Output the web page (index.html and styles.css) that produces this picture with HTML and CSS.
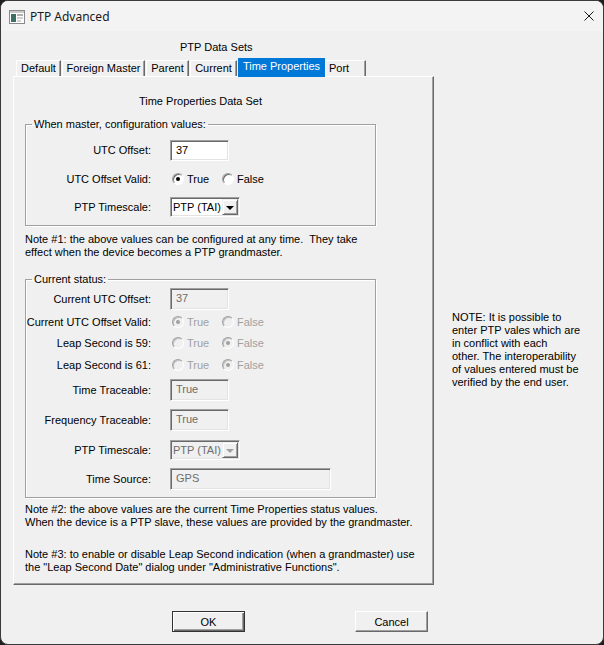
FILE: index.html
```html
<!DOCTYPE html>
<html lang="en">
<head>
    <meta charset="UTF-8">
    <title>PTP Advanced</title>
    <link rel="stylesheet" href="styles.css">
</head>
<body>
    <div class="window">
        <div class="titlebar">
            <svg class="app-icon" width="16" height="14" viewBox="0 0 16 14">
                <rect x="0.5" y="0.5" width="15" height="13" fill="#fff" stroke="#8a8a8a"/>
                <rect x="1" y="1" width="14" height="2" fill="#c8c8c8"/>
                <rect x="2" y="4" width="5" height="8" fill="#3c6e64"/>
                <rect x="8" y="4" width="6" height="2" fill="#b0b0b0"/>
                <rect x="8" y="7" width="6" height="2" fill="#d0d0d0"/>
                <rect x="8" y="10" width="4" height="2" fill="#d0d0d0"/>
            </svg>
            <span class="title">PTP Advanced</span>
            <svg class="close" width="10" height="10" viewBox="0 0 10 10">
                <path d="M0.5 0.5 L9.5 9.5 M9.5 0.5 L0.5 9.5" stroke="#1a1a1a" stroke-width="1"/>
            </svg>
        </div>

        <div class="client">
            <div class="sheet-title">PTP Data Sets</div>
            <div class="tabs">
                <div class="tab tab-default">Default</div>
                <div class="tab tab-foreign">Foreign Master</div>
                <div class="tab tab-parent">Parent</div>
                <div class="tab tab-current">Current</div>
                <div class="tab tab-active">Time Properties</div>
                <div class="tab tab-port">Port</div>
            </div>

            <div class="main">
                <div class="panel">
                    <div class="panel-title">Time Properties Data Set</div>

                    <fieldset class="group">
                        <legend>When master, configuration values:</legend>
                        <div class="form form-master">
                            <label>UTC Offset:</label>
                            <div class="field field-short">37</div>

                            <label>UTC Offset Valid:</label>
                            <div class="radios">
                                <span class="opt"><span class="radio checked"></span>True</span>
                                <span class="opt"><span class="radio"></span>False</span>
                            </div>

                            <label>PTP Timescale:</label>
                            <div class="combo">
                                <span class="combo-text">PTP (TAI)</span>
                                <span class="combo-btn"><span class="arrow"></span></span>
                            </div>
                        </div>
                    </fieldset>

                    <p class="note note-1">Note #1: the above values can be configured at any time.&nbsp; They take<br>effect when the device becomes a PTP grandmaster.</p>

                    <fieldset class="group group-status">
                        <legend>Current status:</legend>
                        <div class="form form-status">
                            <label>Current UTC Offset:</label>
                            <div class="field field-short disabled">37</div>

                            <label>Current UTC Offset Valid:</label>
                            <div class="radios disabled">
                                <span class="opt"><span class="radio checked"></span>True</span>
                                <span class="opt"><span class="radio"></span>False</span>
                            </div>

                            <label>Leap Second is 59:</label>
                            <div class="radios disabled">
                                <span class="opt"><span class="radio"></span>True</span>
                                <span class="opt"><span class="radio checked"></span>False</span>
                            </div>

                            <label>Leap Second is 61:</label>
                            <div class="radios disabled">
                                <span class="opt"><span class="radio"></span>True</span>
                                <span class="opt"><span class="radio checked"></span>False</span>
                            </div>

                            <label>Time Traceable:</label>
                            <div class="field field-short disabled">True</div>

                            <label>Frequency Traceable:</label>
                            <div class="field field-short disabled">True</div>

                            <label>PTP Timescale:</label>
                            <div class="combo disabled">
                                <span class="combo-text">PTP (TAI)</span>
                                <span class="combo-btn"><span class="arrow"></span></span>
                            </div>

                            <label>Time Source:</label>
                            <div class="field field-long disabled">GPS</div>
                        </div>
                    </fieldset>

                    <p class="note note-2">Note #2: the above values are the current Time Properties status values.<br>When the device is a PTP slave, these values are provided by the grandmaster.</p>

                    <p class="note note-3">Note #3: to enable or disable Leap Second indication (when a grandmaster) use<br>the "Leap Second Date" dialog under "Administrative Functions".</p>
                </div>

                <p class="side-note">NOTE: It is possible to<br>enter PTP vales which are<br>in conflict with each<br>other. The interoperability<br>of values entered must be<br>verified by the end user.</p>
            </div>

            <div class="buttons">
                <button class="btn btn-default">OK</button>
                <button class="btn">Cancel</button>
            </div>
        </div>
    </div>
</body>
</html>
```

FILE: styles.css
```css
html, body {
    margin: 0;
    padding: 0;
}

body {
    background-color: #1e1e1e;
    font-family: "Liberation Sans", Arial, sans-serif;
    font-size: 11px;
    line-height: 13px;
    color: #000;
}

.window {
    width: 604px;
    height: 645px;
    box-sizing: border-box;
    border: 1px solid #3a3a3a;
    border-radius: 8px;
    background-color: #f0f0f0;
    overflow: hidden;
}

/* title bar */
.titlebar {
    height: 30px;
    display: flex;
    align-items: center;
    padding: 0 9px 0 8px;
    background-color: #f3f3f3;
}

.app-icon {
    margin-right: 5px;
    margin-top: 1px;
}

.title {
    font-family: "Noto Sans", "Open Sans", sans-serif;
    font-size: 12px;
    color: #1a1a1a;
    flex: 1;
}

.close {
    margin-bottom: 1px;
}

/* dialog body */
.client {
    padding: 10px 0 0 12px;
}

.sheet-title {
    padding-left: 167px;
}

.tabs {
    display: flex;
    align-items: flex-start;
    height: 18px;
    margin-top: 4px;
    padding-left: 3px;
}

.tab {
    height: 16px;
    margin-top: 2px;
    box-sizing: border-box;
    border-top: 1px solid #fff;
    border-left: 1px solid #fff;
    border-right: 1px solid #696969;
    box-shadow: inset -1px 0 #a0a0a0;
    line-height: 15px;
    text-align: center;
    white-space: nowrap;
}

.tab + .tab {
    margin-left: 1px;
}

.tab-default {
    width: 45px;
}

.tab-foreign {
    width: 83px;
}

.tab-parent {
    width: 43px;
}

.tab-current {
    width: 47px;
}

.tab-active {
    position: relative;
    z-index: 1;
    width: 87px;
    height: 19px;
    margin-top: 0;
    border: none;
    box-shadow: none;
    background-color: #0078d7;
    color: #fff;
    line-height: 17px;
}

.tab-active + .tab {
    margin-left: 0;
}

.tab-port {
    width: 41px;
    text-align: left;
    padding-left: 3px;
}

.main {
    display: flex;
    align-items: flex-start;
}

.panel {
    width: 421px;
    height: 509px;
    box-sizing: border-box;
    padding: 18px 0 0 11px;
    border-top: 1px solid #fff;
    border-left: 1px solid #fff;
    border-right: 1px solid #696969;
    border-bottom: 1px solid #696969;
    box-shadow: inset -1px -1px #a0a0a0;
}

.panel-title {
    width: 351px;
    text-align: center;
}

/* group boxes */
.group {
    width: 351px;
    box-sizing: border-box;
    margin: 10px 0 0;
    padding: 9px 0 8px;
    min-width: 0;
    border: 1px solid #a0a0a0;
    box-shadow: inset 1px 1px #fff, 1px 1px #fff;
}

.group legend {
    margin-left: 6px;
    padding: 0 2px;
    line-height: 13px;
}

.group-status {
    margin-top: 14px;
    padding: 2px 0 1px;
}

.form {
    display: grid;
    grid-template-columns: 125px auto;
    column-gap: 19px;
    align-items: center;
}

.form-master {
    grid-template-rows: 21px 36px 20px;
}

.form-status {
    grid-template-rows: 22px 24px 18px 26px 24px 36px 24px 34px;
}

.form label {
    text-align: right;
    white-space: nowrap;
}

/* inputs */
.field {
    box-sizing: border-box;
    height: 21px;
    padding: 2px 5px 0;
    border: 1px solid;
    border-color: #a0a0a0 #fff #fff #a0a0a0;
    box-shadow: inset 1px 1px #696969, inset -1px -1px #e3e3e3;
    background-color: #fff;
    line-height: 14px;
}

.field-short {
    width: 59px;
}

.field-long {
    width: 161px;
}

.form-status .field {
    height: 22px;
}

.field.disabled {
    background-color: #f0f0f0;
    color: #6d6d6d;
}

/* radio buttons */
.radios {
    display: flex;
    padding-left: 2px;
}

.opt {
    display: inline-flex;
    align-items: center;
    width: 50px;
    gap: 3px;
}

.radio {
    position: relative;
    width: 12px;
    height: 12px;
    box-sizing: border-box;
    border-radius: 50%;
    border: 1px solid;
    border-color: #a0a0a0 #fff #fff #a0a0a0;
    box-shadow: inset 1px 1px #696969;
    background-color: #fff;
}

.radio.checked::after {
    content: "";
    position: absolute;
    left: 3px;
    top: 3px;
    width: 4px;
    height: 4px;
    border-radius: 50%;
    background-color: #000;
}

.radios.disabled {
    color: #a0a0a0;
}

.radios.disabled .radio {
    background-color: #f0f0f0;
    box-shadow: inset 1px 1px #c0c0c0;
}

.radios.disabled .radio.checked::after {
    background-color: #a0a0a0;
}

/* combo box */
.combo {
    display: flex;
    width: 70px;
    height: 20px;
    box-sizing: border-box;
    padding: 1px;
    border: 1px solid;
    border-color: #a0a0a0 #fff #fff #a0a0a0;
    box-shadow: inset 1px 1px #696969, inset -1px -1px #e3e3e3;
    background-color: #fff;
}

.combo-text {
    flex: 1;
    padding-left: 1px;
    line-height: 16px;
    white-space: nowrap;
}

.combo-btn {
    display: flex;
    align-items: center;
    justify-content: center;
    width: 16px;
    box-sizing: border-box;
    border: 1px solid;
    border-color: #f0f0f0 #696969 #696969 #f0f0f0;
    box-shadow: inset 1px 1px #fff, inset -1px -1px #a0a0a0;
    background-color: #f0f0f0;
}

.arrow {
    width: 0;
    height: 0;
    border-left: 4px solid transparent;
    border-right: 4px solid transparent;
    border-top: 4px solid #000;
    margin-top: 1px;
}

.combo.disabled {
    background-color: #f0f0f0;
    color: #6d6d6d;
}

.combo.disabled .arrow {
    border-top-color: #a0a0a0;
}

/* notes */
.note {
    margin: 0;
    white-space: nowrap;
}

.note-1 {
    margin-top: 7px;
}

.note-2 {
    margin-top: 5px;
}

.note-3 {
    margin-top: 19px;
}

.side-note {
    margin: 235px 0 0 18px;
    white-space: nowrap;
}

/* buttons */
.buttons {
    display: flex;
    gap: 110px;
    margin-top: 26px;
    padding-left: 159px;
}

.btn {
    width: 73px;
    height: 21px;
    padding: 0;
    font-family: "Liberation Sans", Arial, sans-serif;
    font-size: 11px;
    color: #000;
    background-color: #f0f0f0;
    border: 1px solid;
    border-color: #fff #696969 #696969 #fff;
    box-shadow: inset -1px -1px #a0a0a0;
}

.btn-default {
    border-color: #333;
    box-shadow: inset 1px 1px #fff, inset -1px -1px #696969, inset -2px -2px #a0a0a0;
}
```
